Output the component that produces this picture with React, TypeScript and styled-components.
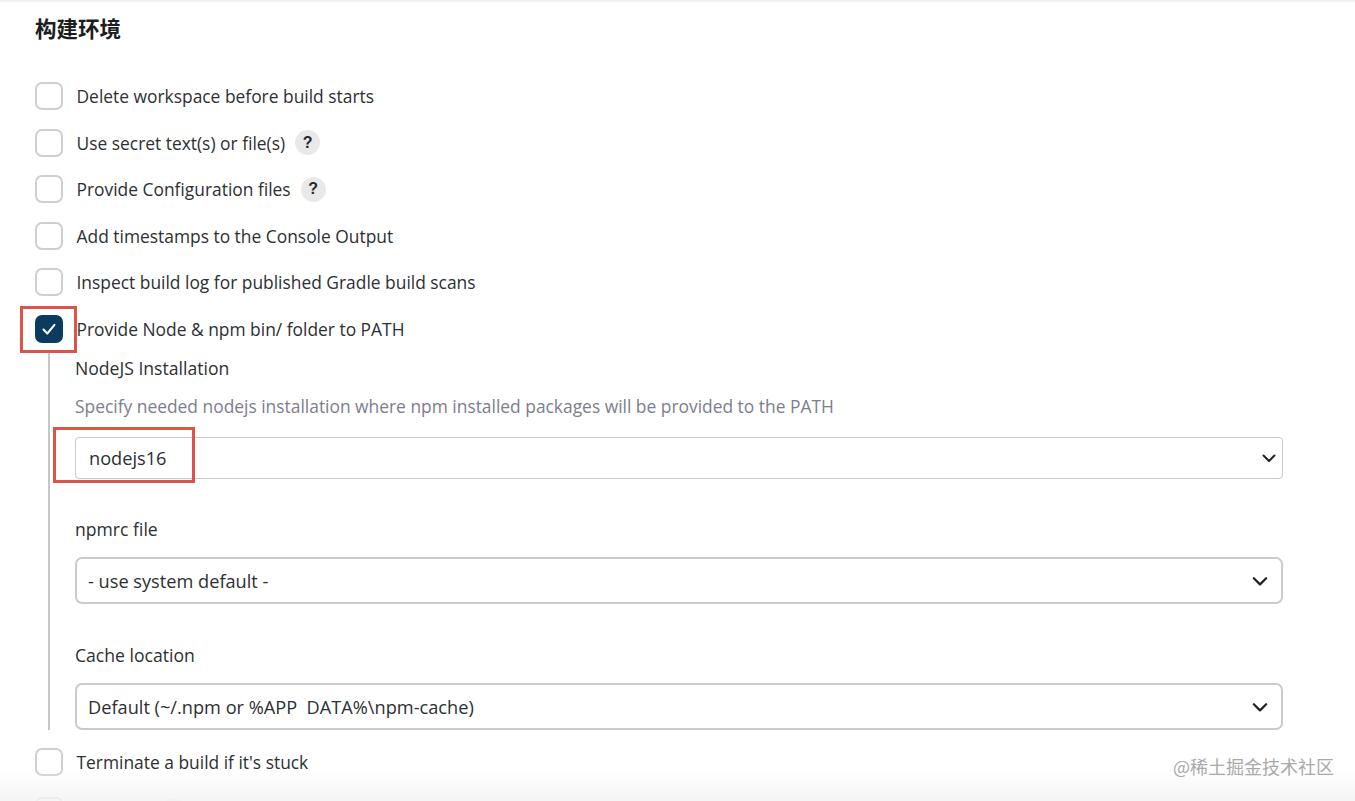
import React from "react";
import styled, { createGlobalStyle } from "styled-components";

const GlobalStyle = createGlobalStyle`
    html, body {
        margin: 0;
        height: 100%;
        background: #fff;
        overflow: hidden;
    }
    body {
        font-family: "Open Sans", "Noto Sans CJK SC", sans-serif;
        color: #1f2328;
    }
`;

const Page = styled.div`
    position: relative;
    width: 1355px;
    height: 801px;
    overflow: hidden;
    box-sizing: border-box;
    border-top: 2px solid #f2f2f2;
    padding-left: 35px;
`;

const Title = styled.h2`
    margin: 0;
    height: 71px;
    padding-top: 11px;
    box-sizing: border-box;
    font-family: "Noto Sans CJK SC", sans-serif;
    font-size: 21.5px;
    line-height: 30px;
    font-weight: 700;
    color: #1b1d21;
`;

const Row = styled.div`
    display: flex;
    align-items: center;
    height: 46.5px;
`;

const LastRow = styled(Row)`
    margin-top: 2px;
`;

const Box = styled.span<{ $checked?: boolean }>`
    flex: none;
    display: flex;
    align-items: center;
    justify-content: center;
    width: 28px;
    height: 28px;
    box-sizing: border-box;
    border-radius: 7px;
    border: ${(p) => (p.$checked ? "none" : "2px solid #cdd0d2")};
    background: ${(p) => (p.$checked ? "#0b3c5f" : "#fff")};
`;

const RowLabel = styled.span<{ $minWidth?: number }>`
    margin-left: 13.5px;
    min-width: ${(p) => p.$minWidth ?? 0}px;
    font-size: 17.4px;
    line-height: 24px;
    color: #2c2f33;
`;

const Help = styled.span`
    display: flex;
    align-items: center;
    justify-content: center;
    width: 25px;
    height: 25px;
    margin-left: 10px;
    border-radius: 50%;
    background: #e9e9ea;
    font-family: "Liberation Sans", sans-serif;
    font-size: 16px;
    font-weight: 700;
    color: #25282c;
`;

const Nested = styled.div`
    margin: -1px 0 9px 13px;
    width: 1235px;
    height: 379px;
    box-sizing: border-box;
    border-left: 2px solid #c4c7c9;
    padding-left: 25px;
`;

const Field = styled.div<{ $height: number }>`
    height: ${(p) => p.$height}px;
`;

const FieldLabel = styled.div<{ $top: number }>`
    padding-top: ${(p) => p.$top}px;
    font-size: 17.6px;
    line-height: 24px;
    color: #2c2f33;
`;

const Description = styled.div`
    margin-top: 14px;
    font-size: 17.4px;
    line-height: 24px;
    color: #7c7e8c;
`;

const Select = styled.div<{ $large?: boolean; $top: number }>`
    display: flex;
    align-items: center;
    justify-content: space-between;
    box-sizing: border-box;
    margin-top: ${(p) => p.$top}px;
    height: ${(p) => (p.$large ? 47 : 42)}px;
    padding: ${(p) => (p.$large ? "0 12px 0 11px" : "0 5px 0 13px")};
    background: #fff;
    border-radius: ${(p) => (p.$large ? 7 : 4)}px;
    border: ${(p) => (p.$large ? "2px solid #c9cbcd" : "1px solid #c9cbcd")};
    font-size: 18.2px;
    color: #2c2f33;
`;

const Fade = styled.div`
    position: absolute;
    left: 0;
    right: 0;
    bottom: 0;
    height: 32px;
    background: linear-gradient(rgba(243, 243, 243, 0), rgba(243, 243, 243, 0.85));
`;

const Annotation = styled.div<{ $x: number; $y: number; $w: number; $h: number }>`
    position: absolute;
    left: ${(p) => p.$x}px;
    top: ${(p) => p.$y}px;
    width: ${(p) => p.$w}px;
    height: ${(p) => p.$h}px;
    box-sizing: border-box;
    border: 3px solid #dc5347;
`;

const Watermark = styled.div`
    position: absolute;
    right: 21px;
    top: 753px;
    font-family: "Noto Sans CJK SC", sans-serif;
    font-size: 18px;
    line-height: 22px;
    color: #a9a9a9;
`;

const Chevron = ({ size }: { size: number }) => (
    <svg width={size} height={size} viewBox="0 0 16 16" fill="none">
        <path d="M2.5 5.5 8 11l5.5-5.5" stroke="#1f2328" strokeWidth="2" strokeLinecap="round" strokeLinejoin="round" />
    </svg>
);

const topRows = [
    { label: "Delete workspace before build starts" },
    { label: "Use secret text(s) or file(s)", help: true },
    { label: "Provide Configuration files", help: true },
    { label: "Add timestamps to the Console Output" },
    { label: "Inspect build log for published Gradle build scans" },
];

const App = () => {
    return (
        <Page>
            <GlobalStyle />
            <Title>构建环境</Title>
            {topRows.map((row) => (
                <Row key={row.label}>
                    <Box />
                    <RowLabel>{row.label}</RowLabel>
                    {row.help && <Help>?</Help>}
                </Row>
            ))}
            <Row>
                <Box $checked>
                    <svg width="16" height="16" viewBox="0 0 16 16" fill="none">
                        <path d="M2.5 8.5 6.3 12.5 13.5 3.8" stroke="#fff" strokeWidth="2" strokeLinecap="round" strokeLinejoin="round" />
                    </svg>
                </Box>
                <RowLabel>Provide Node &amp; npm bin/ folder to PATH</RowLabel>
            </Row>
            <Nested>
                <Field $height={158}>
                    <FieldLabel $top={5}>NodeJS Installation</FieldLabel>
                    <Description>Specify needed nodejs installation where npm installed packages will be provided to the PATH</Description>
                    <Select $top={19}>
                        nodejs16
                        <Chevron size={16} />
                    </Select>
                </Field>
                <Field $height={126}>
                    <FieldLabel $top={8}>npmrc file</FieldLabel>
                    <Select $large $top={16}>
                        - use system default -
                        <Chevron size={18} />
                    </Select>
                </Field>
                <Field $height={89}>
                    <FieldLabel $top={8}>Cache location</FieldLabel>
                    <Select $large $top={16}>
                        {"Default (~/.npm or %APP\u00a0\u00a0DATA%\\npm-cache)"}
                        <Chevron size={18} />
                    </Select>
                </Field>
            </Nested>
            <Row>
                <Box />
                <RowLabel>Terminate a build if it's stuck</RowLabel>
            </Row>
            <LastRow>
                <Box />
                <RowLabel $minWidth={74} />
                <Help />
            </LastRow>
            <Fade />
            <Annotation $x={20} $y={304} $w={57} $h={47} />
            <Annotation $x={53} $y={425} $w={142} $h={56} />
            <Watermark>@稀土掘金技术社区</Watermark>
        </Page>
    );
};

export default App;
